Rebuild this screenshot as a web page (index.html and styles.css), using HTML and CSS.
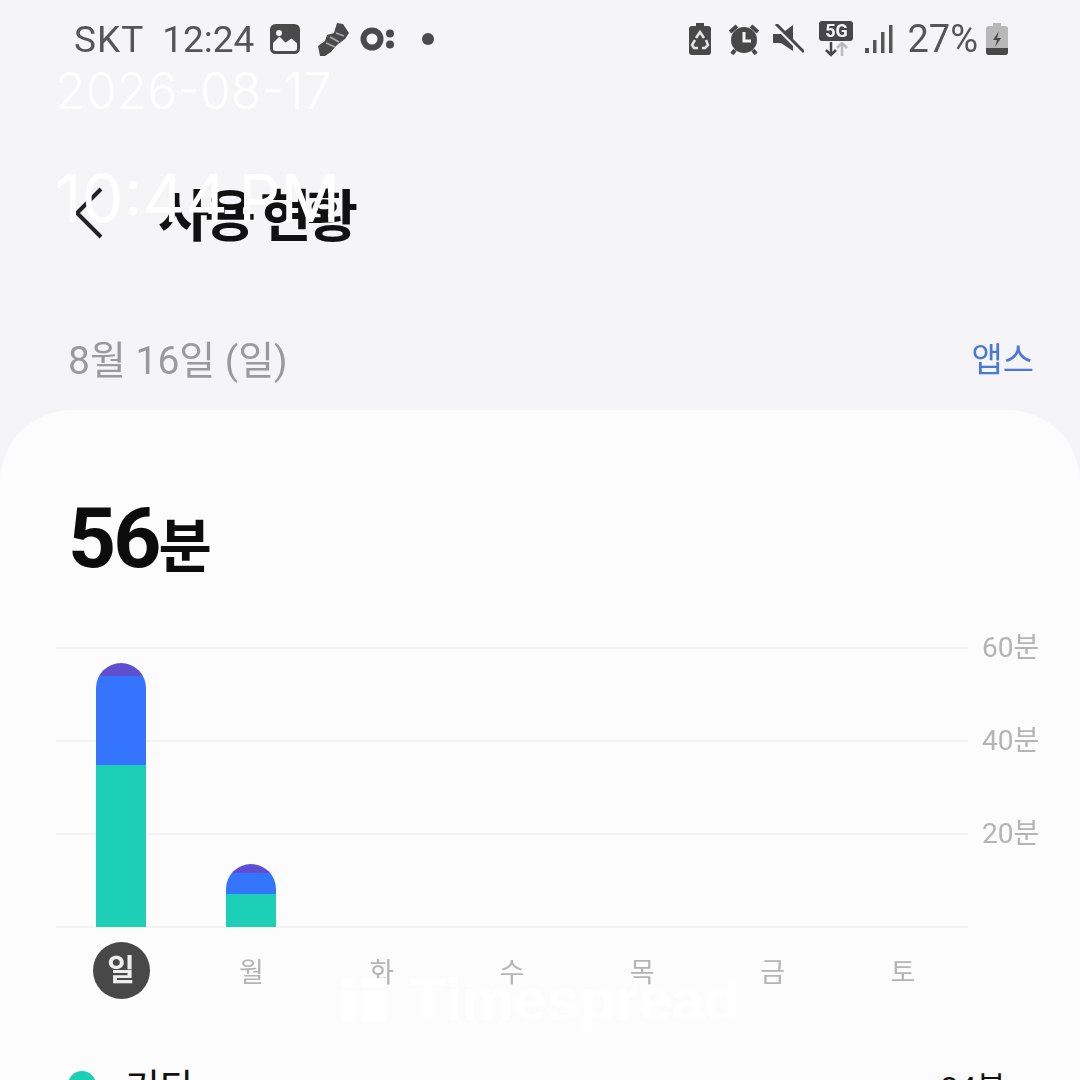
FILE: index.html
```html
<!DOCTYPE html>
<html lang="ko">
<head>
  <meta charset="UTF-8" />
  <meta name="viewport" content="width=device-width, initial-scale=1.0"/>
  <title>사용 현황</title>
  <link rel="stylesheet" href="styles.css">
</head>
<body>
<div id="screen">

  <div id="statusBar">
    <div class="status-left">
      <span class="status-text carrier">SKT</span>
      <span class="status-text clock">12:24</span>
      <svg class="ic-image" width="30" height="30" viewBox="0 0 30 30"><rect x="1.500" y="1.500" width="27" height="27" rx="4" fill="none" stroke="#4a4a4a" stroke-width="3"/><path d="M1.500 5.500a4 4 0 0 1 4-4h19a4 4 0 0 1 4 4v15l-7-6-6 4-6-6-8 8z" fill="#4a4a4a"/><circle cx="9" cy="9" r="3" fill="#f5f5f7"/></svg>
      <svg class="ic-shoe" width="32" height="36" viewBox="0 0 32 36"><path d="M3 35l-2-10 7-5 2-6 7-2 3-10 6 1 6 9-4 6-8 6-6 7-6 4z" fill="#4a4a4a"/><path d="M9 22l9 4M13 16l9 5M19 12l8 3" stroke="#a8a8a8" stroke-width="1.800" fill="none"/></svg>
      <svg class="ic-dots" width="36" height="24" viewBox="0 0 36 24"><circle cx="12" cy="12" r="8.500" fill="none" stroke="#4a4a4a" stroke-width="6"/><circle cx="30" cy="6.500" r="4" fill="#4a4a4a"/><circle cx="30" cy="17.500" r="4" fill="#4a4a4a"/></svg>
      <span class="status-dot"></span>
    </div>
    <div class="status-right">
      <svg class="ic-saver" width="24" height="34" viewBox="0 0 24 34"><path d="M8 1h8v3h4a3 3 0 0 1 3 3v23a3 3 0 0 1-3 3H4a3 3 0 0 1-3-3V7a3 3 0 0 1 3-3h4z" fill="#484848"/><path d="M8 16l4-6 4 6M18 18l2 5-3 3h-3M10 26H6l-2-3 3-5" fill="none" stroke="#e4e4e6" stroke-width="2.500"/></svg>
      <svg class="ic-alarm" width="30" height="32" viewBox="0 0 30 32"><circle cx="15" cy="17" r="13" fill="#484848"/><path d="M15 9v9h7" fill="none" stroke="#f5f5f7" stroke-width="3"/><path d="M1 9l7-6M29 9l-7-6M6 27l-3 4M24 27l3 4" stroke="#484848" stroke-width="4"/></svg>
      <svg class="ic-mute" width="32" height="30" viewBox="0 0 32 30"><path d="M1 10h8L21 1v26L9 19H1z" fill="#484848"/><path d="M3 1l27 27" stroke="#f5f5f7" stroke-width="4.500"/><path d="M4 0l28 28" stroke="#484848" stroke-width="3"/></svg>
      <div class="net">
        <span class="net-badge">5G</span>
        <svg width="26" height="15" viewBox="0 0 26 15"><path d="M8 0v12M3 8l5 5 5-5" fill="none" stroke="#484848" stroke-width="2.500"/><path d="M19 14V2M14 6l5-5 5 5" fill="none" stroke="#bbb" stroke-width="2.500"/></svg>
      </div>
      <svg class="ic-signal" width="28" height="30" viewBox="0 0 28 30"><rect x="0" y="24" width="4" height="5" fill="#555"/><rect x="8" y="16" width="3.500" height="13" fill="#555"/><rect x="16" y="8" width="3.500" height="21" fill="#555"/><rect x="24" y="1" width="3.500" height="28" fill="#555"/></svg>
      <span class="status-text pct">27%</span>
      <svg class="ic-batt" width="22" height="32" viewBox="0 0 22 32"><path d="M7 0h8v3h4a3 3 0 0 1 3 3v23a3 3 0 0 1-3 3H3a3 3 0 0 1-3-3V6a3 3 0 0 1 3-3h4z" fill="#b8b8b8"/><path d="M0 25h22v4a3 3 0 0 1-3 3H3a3 3 0 0 1-3-3z" fill="#484848"/><path d="M13 8l-6 9h4l-2 7 6-9h-4z" fill="#484848"/></svg>
    </div>
  </div>

  <div class="title-row">
    <svg class="back" width="30" height="52" viewBox="0 0 30 52"><path d="M27 2L3 26l24 24" fill="none" stroke="#222" stroke-width="4"/></svg>
    <h1 class="title">사용 현황</h1>
  </div>

  <div class="date-row">
    <span class="date">8월 16일 (일)</span>
    <span class="apps">앱스</span>
  </div>

  <div class="card">
    <div class="total"><span class="total-num">56</span><span class="total-unit">분</span></div>

    <div class="chart">
      <div class="grid-rows">
        <div class="grid-row"><span class="grid-line"></span><span class="grid-label">60분</span></div>
        <div class="grid-row"><span class="grid-line"></span><span class="grid-label">40분</span></div>
        <div class="grid-row"><span class="grid-line"></span><span class="grid-label">20분</span></div>
        <div class="grid-row"><span class="grid-line"></span><span class="grid-label"></span></div>
      </div>
      <div class="bars">
        <div class="bar-slot">
          <div class="bar">
            <div class="seg purple" style="height:13px"></div>
            <div class="seg blue" style="height:89px"></div>
            <div class="seg green" style="height:162px"></div>
          </div>
        </div>
        <div class="bar-slot">
          <div class="bar">
            <div class="seg purple" style="height:9px"></div>
            <div class="seg blue" style="height:21px"></div>
            <div class="seg green" style="height:33px"></div>
          </div>
        </div>
        <div class="bar-slot"></div>
        <div class="bar-slot"></div>
        <div class="bar-slot"></div>
        <div class="bar-slot"></div>
        <div class="bar-slot"></div>
      </div>
    </div>

    <div class="days">
      <div class="day"><span class="day-on">일</span></div>
      <div class="day">월</div>
      <div class="day">화</div>
      <div class="day">수</div>
      <div class="day">목</div>
      <div class="day">금</div>
      <div class="day">토</div>
    </div>

    <div class="legend-row">
      <span class="legend-dot"></span>
      <span class="legend-name">기타</span>
      <span class="legend-time">34분</span>
    </div>
  </div>

  <div id="stamp">
    <div class="stamp-date">2026-08-17</div>
    <div class="stamp-time">10:44 PM</div>
  </div>

  <div id="watermark">
    <svg width="46" height="44" viewBox="0 0 46 44"><rect x="0" y="0" width="14" height="9" fill="#fff"/><rect x="0" y="13" width="14" height="31" fill="#fff"/><rect x="19" y="0" width="25" height="9" fill="#fff"/><rect x="19" y="13" width="25" height="31" fill="#fff"/></svg>
    <span>Timespread</span>
  </div>
</div>
</body>
</html>
```
FILE: styles.css
```css
html, body {
  margin: 0;
  background: #f5f5f7;
}

#screen {
  position: relative;
  width: 1080px;
  height: 1080px;
  overflow: hidden;
  background: #f5f5f7;
  font-family: "Roboto", "Noto Sans CJK KR", sans-serif;
}

/* status bar */
#statusBar {
  display: flex;
  justify-content: space-between;
  align-items: center;
  height: 78px;
  padding: 0 72px 0 74px;
  filter: blur(0.6px);
}

.status-left, .status-right {
  display: flex;
  align-items: center;
}

.status-text {
  font-size: 37px;
  color: #555;
  line-height: 1;
}

.carrier { letter-spacing: 1px; }
.clock { margin-left: 18px; }
.ic-image { margin-left: 16px; }
.ic-shoe { margin-left: 17px; }
.ic-dots { margin-left: 11px; }

.status-dot {
  width: 12px;
  height: 12px;
  margin-left: 26px;
  border-radius: 50%;
  background: #4a4a4a;
}

.ic-alarm { margin-left: 17px; }
.ic-mute { margin-left: 13px; }

.net {
  display: flex;
  flex-direction: column;
  align-items: center;
  margin-left: 15px;
  gap: 1px;
}

.net-badge {
  width: 34px;
  height: 20px;
  border-radius: 3px;
  background: #484848;
  color: #f5f5f7;
  font-size: 18px;
  font-weight: 700;
  line-height: 20px;
  text-align: center;
}

.ic-signal { margin-left: 12px; }
.pct { margin-left: 14px; font-size: 38px; }
.ic-batt { margin-left: 8px; }

/* header */
.title-row {
  display: flex;
  align-items: center;
  height: 110px;
  margin-top: 80px;
  padding-left: 74px;
}

.title {
  margin: 0 0 3px 54px;
  font-size: 56px;
  font-weight: 700;
  letter-spacing: -5px;
  color: #111;
  filter: blur(0.5px);
}

.date-row {
  display: flex;
  justify-content: space-between;
  align-items: center;
  height: 60px;
  margin-top: 59px;
  padding: 0 46px 0 68px;
  filter: blur(0.5px);
}

.date {
  font-size: 39px;
  color: #9a9a9a;
}

.apps {
  font-size: 34px;
  color: #4a78d8;
}

/* card */
.card {
  margin-top: 23px;
  height: 700px;
  background: #fcfcfc;
  border-radius: 72px 72px 0 0;
}

.total {
  display: flex;
  align-items: baseline;
  height: 100px;
  padding: 79px 0 0 68px;
  color: #0c0c0c;
  font-weight: 700;
  line-height: 100px;
}

.total-num { font-size: 84px; letter-spacing: -3px; }
.total-unit { font-size: 58px; }

/* chart: grid lines and bars share one grid cell */
.chart {
  display: grid;
  width: 1040px;
  margin: 41px 0 0 56px;
}

.grid-rows, .bars {
  grid-area: 1 / 1;
}

.grid-rows {
  display: flex;
  flex-direction: column;
  justify-content: space-between;
  height: 315px;
}

.grid-row {
  display: flex;
  align-items: center;
  gap: 14px;
  height: 36px;
}

.grid-line {
  width: 912px;
  height: 2px;
  background: #f3f3f3;
}

.grid-label {
  font-size: 28px;
  line-height: 36px;
  color: #b4b4b4;
  filter: blur(0.5px);
}

.bars {
  display: flex;
  width: 912px;
  height: 279px;
  margin-top: 18px;
}

.bar-slot {
  flex: 1;
  display: flex;
  justify-content: center;
  align-items: flex-end;
}

.bar {
  width: 50px;
  overflow: hidden;
  border-radius: 25px 25px 0 0;
}

.seg { width: 100%; }
.purple { background: #5f4fd0; }
.blue { background: #3575fd; }
.green { background: #1dcfb6; }

.days {
  display: flex;
  width: 912px;
  margin: -4px 0 0 56px;
}

.day {
  flex: 1;
  display: flex;
  justify-content: center;
  align-items: center;
  height: 58px;
  font-size: 27px;
  color: #b4b4b4;
  filter: blur(0.5px);
}

.day-on {
  width: 57px;
  height: 57px;
  border-radius: 50%;
  background: #484848;
  color: #eee;
  font-size: 30px;
  font-weight: 700;
  line-height: 55px;
  text-align: center;
}

.legend-row {
  display: flex;
  align-items: center;
  margin-top: 58px;
  padding: 0 74px 0 68px;
  font-size: 38px;
  color: #111;
}

.legend-dot {
  width: 28px;
  height: 28px;
  border-radius: 50%;
  background: #1dcfb6;
}

.legend-name {
  margin-left: 29px;
}

.legend-time {
  margin-left: auto;
  font-size: 32px;
}

/* overlays that sit on top of the screenshot */
#stamp {
  position: absolute;
  top: 60px;
  left: 55px;
  color: #fff;
  font-family: "Inter", sans-serif;
  font-weight: 300;
}

.stamp-date {
  font-size: 50px;
  line-height: 62px;
}

.stamp-time {
  margin-top: 38px;
  font-size: 66px;
  font-weight: 400;
  word-spacing: -8px;
  line-height: 76px;
}

#watermark {
  position: absolute;
  top: 978px;
  left: 342px;
  display: flex;
  align-items: center;
  gap: 22px;
  color: #fff;
  font-family: "Liberation Sans", sans-serif;
  font-size: 59px;
  font-weight: 700;
  line-height: 44px;
}
```
